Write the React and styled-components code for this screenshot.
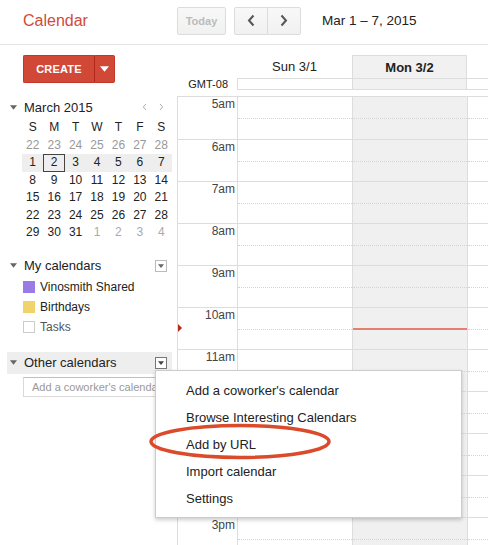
import React from "react";
import styled, { createGlobalStyle } from "styled-components";

const GlobalStyle = createGlobalStyle`
  html, body {
    margin: 0;
    padding: 0;
    background: #fff;
  }
  body {
    font-family: "Liberation Sans", Arial, sans-serif;
    color: #222;
  }
`;

const Page = styled.div`
  position: relative;
  width: 488px;
  height: 545px;
  overflow: hidden;
  background: #fff;
`;

const Header = styled.div`
  display: flex;
  align-items: center;
  height: 45px;
  box-sizing: border-box;
  padding: 7px 0 10px;
  border-bottom: 1px solid #e5e5e5;
`;

const Logo = styled.div`
  width: 177px;
  box-sizing: border-box;
  padding-left: 23px;
  font-size: 16px;
  color: #cf4a3b;
  line-height: 28px;
`;

const GreyButton = styled.button`
  height: 28px;
  width: ${(p) => p.$w || 34}px;
  box-sizing: border-box;
  border: 1px solid #dcdcdc;
  border-radius: ${(p) => p.$radius || "2px"};
  background: linear-gradient(#f8f8f8, #f1f1f1);
  font-family: inherit;
  font-size: 11px;
  font-weight: bold;
  color: #bbb;
  padding: 0;
  display: flex;
  align-items: center;
  justify-content: center;
  margin: 0;
`;

const NavGroup = styled.div`
  display: flex;
  margin-left: 8px;
  & > button + button {
    border-left: 1px solid #dcdcdc;
    margin-left: -1px;
  }
`;

const DateRange = styled.div`
  margin-left: 21px;
  font-size: 13.5px;
  color: #222;
`;

const Body = styled.div`
  display: flex;
`;

const Sidebar = styled.div`
  width: 177px;
  flex: none;
  padding-top: 10px;
`;

const CreateRow = styled.div`
  display: flex;
  margin-left: 23px;
  height: 28px;
`;

const CreateMain = styled.div`
  width: 71px;
  background: #d14836;
  border: 1px solid #c13828;
  border-right: none;
  border-radius: 2px 0 0 2px;
  box-sizing: border-box;
  color: #fff;
  font-size: 11px;
  font-weight: bold;
  display: flex;
  align-items: center;
  justify-content: center;
  letter-spacing: 0.2px;
`;

const CreateArrow = styled.div`
  width: 21px;
  background: #d14836;
  border: 1px solid #c13828;
  border-left: 1px solid #b0281a;
  border-radius: 0 2px 2px 0;
  box-sizing: border-box;
  display: flex;
  align-items: center;
  justify-content: center;
`;

const SectionHead = styled.div`
  display: flex;
  align-items: center;
  height: ${(p) => p.$h || 16}px;
  margin: ${(p) => p.$mt || 0}px 5px 0 7px;
  padding: 0 5px 0 3px;
  background: ${(p) => (p.$shaded ? "#eee" : "transparent")};
  font-size: 13px;
  color: #222;
`;

const HeadTitle = styled.div`
  flex: 1;
  margin-left: 7px;
  white-space: nowrap;
`;

const MiniNav = styled.div`
  display: flex;
  gap: 12px;
  margin-right: 3px;
`;

const MiniGrid = styled.div`
  display: grid;
  grid-template-columns: repeat(7, 1fr);
  width: 150px;
  margin: 4px 0 0 22px;
`;

const MiniCell = styled.div`
  height: 17.5px;
  line-height: 17.5px;
  text-align: center;
  font-size: 12px;
  color: ${(p) => p.$color || "#222"};
  background: ${(p) => (p.$week ? "#eee" : "transparent")};
  box-sizing: border-box;
  ${(p) => (p.$today ? "box-shadow: inset 0 0 0 1px #444;" : "")}
`;

const CalItem = styled.div`
  display: flex;
  align-items: center;
  height: 20px;
  padding-left: 23px;
  font-size: 12px;
  color: ${(p) => (p.$muted ? "#555" : "#222")};
  margin-top: ${(p) => p.$mt || 0}px;
`;

const Swatch = styled.span`
  width: 12px;
  height: 12px;
  box-sizing: border-box;
  background: ${(p) => p.$color || "#fff"};
  border: 1px solid ${(p) => p.$border || p.$color};
  margin-right: 5px;
  flex: none;
`;

const DropBox = styled.div`
  width: 12px;
  height: 12px;
  box-sizing: border-box;
  border: 1px solid ${(p) => (p.$dark ? "#777" : "#bbb")};
  background: #fff;
  display: flex;
  align-items: center;
  justify-content: center;
`;

const CoworkerInput = styled.div`
  margin: 3px 0 0 23px;
  width: 149px;
  height: 20px;
  box-sizing: border-box;
  border: 1px solid #d9d9d9;
  border-top-color: #c0c0c0;
  padding-left: 8px;
  font-size: 11px;
  line-height: 18px;
  color: #999;
  white-space: nowrap;
  overflow: hidden;
`;

const Main = styled.div`
  flex: 1;
  position: relative;
`;

const DayHeader = styled.div`
  display: grid;
  grid-template-columns: 60px 115px 115px 1fr;
  grid-template-rows: 23px 12px;
  margin: 10px 0 6px;
`;

const DayName = styled.div`
  font-size: 13px;
  line-height: 23px;
  text-align: center;
  font-weight: ${(p) => (p.$bold ? "bold" : "normal")};
  background: ${(p) => (p.$today ? "#f1f1f1" : "transparent")};
  ${(p) =>
    p.$today
      ? "border: 1px solid #ddd; border-bottom: none; box-sizing: border-box;"
      : ""}
`;

const Gmt = styled.div`
  font-size: 11px;
  text-align: right;
  padding-right: 9px;
  line-height: 12px;
  color: #222;
`;

const AllDay = styled.div`
  box-sizing: border-box;
  border-top: 1px solid #ddd;
  border-bottom: 1px solid #ddd;
  ${(p) => (p.$first ? "border-left: 1px solid #ddd;" : "")}
  ${(p) =>
    p.$today
      ? "background: #f1f1f1; border-left: 1px solid #ddd; border-right: 1px solid #ddd;"
      : ""}
`;

const TimeGrid = styled.div`
  display: flex;
  border-top: 1px solid #ddd;
`;

const Column = styled.div`
  position: relative;
  width: ${(p) => p.$w}px;
  flex: ${(p) => (p.$w ? "none" : 1)};
  box-sizing: border-box;
  border-left: 1px solid #ddd;
  background: ${(p) => (p.$today ? "#f0f0f0" : "transparent")};
`;

const Slot = styled.div`
  position: relative;
  height: 42px;
  box-sizing: border-box;
  border-top: ${(p) => (p.$first ? "none" : "1px solid #ddd")};
  ${(p) =>
    p.$half
      ? `&::after {
    content: "";
    position: absolute;
    left: 0;
    right: 0;
    top: 21px;
    border-top: 1px dotted #d4d4d4;
  }`
      : ""}
`;

const TimeLabel = styled(Slot)`
  font-size: 12px;
  color: #444;
  text-align: right;
  padding-right: 2px;
  line-height: 14px;
`;

const NowLine = styled.div`
  position: absolute;
  left: 0;
  right: 0;
  top: 231px;
  height: 2px;
  background: #e5806f;
`;

const NowMark = styled.div`
  position: absolute;
  left: 0;
  top: 227px;
  width: 0;
  height: 0;
  border-top: 4px solid transparent;
  border-bottom: 4px solid transparent;
  border-left: 4px solid #b5281c;
`;

const Menu = styled.div`
  position: absolute;
  left: 155px;
  top: 370px;
  width: 307px;
  height: 148px;
  box-sizing: border-box;
  padding: 6px 0;
  background: #fff;
  border: 1px solid rgba(0, 0, 0, 0.2);
  box-shadow: 0 2px 4px rgba(0, 0, 0, 0.2);
  z-index: 5;
`;

const MenuItem = styled.div`
  height: 27px;
  line-height: 27px;
  padding-left: 30px;
  font-size: 13px;
  color: #222;
  white-space: nowrap;
`;

const Highlight = styled.svg`
  position: absolute;
  left: 148px;
  top: 422px;
  z-index: 6;
  overflow: visible;
`;

const Tri = ({ size = 7, color = "#666" }) => (
  <svg width={size} height={Math.ceil(size / 2) + 1} viewBox="0 0 8 5">
    <path d="M0 0h8L4 5z" fill={color} />
  </svg>
);

const Chevron = ({ dir = "left", color = "#555", w = 8, h = 13, sw = 2 }) => (
  <svg width={w} height={h} viewBox="0 0 8 13" fill="none">
    <path
      d={dir === "left" ? "M6.5 1.5 2 6.5l4.5 5" : "M1.5 1.5 6 6.5l-4.5 5"}
      stroke={color}
      strokeWidth={sw}
    />
  </svg>
);

const weekdays = ["S", "M", "T", "W", "T", "F", "S"];
const weeks = [
  [22, 23, 24, 25, 26, 27, 28],
  [1, 2, 3, 4, 5, 6, 7],
  [8, 9, 10, 11, 12, 13, 14],
  [15, 16, 17, 18, 19, 20, 21],
  [22, 23, 24, 25, 26, 27, 28],
  [29, 30, 31, 1, 2, 3, 4],
];

const hours = ["5am", "6am", "7am", "8am", "9am", "10am", "11am", "12pm", "1pm", "2pm", "3pm"];

const menuItems = [
  "Add a coworker's calendar",
  "Browse Interesting Calendars",
  "Add by URL",
  "Import calendar",
  "Settings",
];

function MiniCalendar() {
  return (
    <MiniGrid>
      {weekdays.map((d, i) => (
        <MiniCell key={"w" + i}>{d}</MiniCell>
      ))}
      {weeks.map((week, wi) =>
        week.map((d, di) => {
          let color = "#222";
          if (wi === 0) color = "#999";
          if (wi === 5 && di > 2) color = "#aaa";
          return (
            <MiniCell
              key={wi + "-" + di}
              $color={color}
              $week={wi === 1}
              $today={wi === 1 && di === 1}
            >
              {d}
            </MiniCell>
          );
        })
      )}
    </MiniGrid>
  );
}

function DayColumn({ width, today, children }) {
  return (
    <Column $w={width} $today={today}>
      {hours.map((h, i) => (
        <Slot key={h} $first={i === 0} $half />
      ))}
      {children}
    </Column>
  );
}

export default function App() {
  return (
    <Page>
      <GlobalStyle />
      <Header>
        <Logo>Calendar</Logo>
        <GreyButton $w={49}>Today</GreyButton>
        <NavGroup>
          <GreyButton $radius="2px 0 0 2px">
            <Chevron dir="left" />
          </GreyButton>
          <GreyButton $radius="0 2px 2px 0">
            <Chevron dir="right" />
          </GreyButton>
        </NavGroup>
        <DateRange>Mar 1 – 7, 2015</DateRange>
      </Header>
      <Body>
        <Sidebar>
          <CreateRow>
            <CreateMain>CREATE</CreateMain>
            <CreateArrow>
              <Tri size={9} color="#fff" />
            </CreateArrow>
          </CreateRow>

          <SectionHead $mt={16}>
            <Tri size={7} />
            <HeadTitle>March 2015</HeadTitle>
            <MiniNav>
              <Chevron dir="left" color="#999" w={5} h={8} sw={1.3} />
              <Chevron dir="right" color="#999" w={5} h={8} sw={1.3} />
            </MiniNav>
          </SectionHead>
          <MiniCalendar />

          <SectionHead $mt={16}>
            <Tri size={7} />
            <HeadTitle>My calendars</HeadTitle>
            <DropBox>
              <Tri size={6} color="#666" />
            </DropBox>
          </SectionHead>
          <CalItem $mt={3}>
            <Swatch $color="#9a7be6" />
            Vinosmith Shared
          </CalItem>
          <CalItem>
            <Swatch $color="#f0d36a" />
            Birthdays
          </CalItem>
          <CalItem $muted>
            <Swatch $color="#fff" $border="#ccc" />
            Tasks
          </CalItem>

          <SectionHead $mt={15} $h={22} $shaded>
            <Tri size={7} />
            <HeadTitle>Other calendars</HeadTitle>
            <DropBox $dark>
              <Tri size={6} color="#444" />
            </DropBox>
          </SectionHead>
          <CoworkerInput>Add a coworker's calendar</CoworkerInput>
        </Sidebar>

        <Main>
          <DayHeader>
            <div />
            <DayName>Sun 3/1</DayName>
            <DayName $bold $today>
              Mon 3/2
            </DayName>
            <div />
            <Gmt>GMT-08</Gmt>
            <AllDay $first />
            <AllDay $today />
            <AllDay />
          </DayHeader>
          <TimeGrid>
            <Column $w={60}>
              {hours.map((h, i) => (
                <TimeLabel key={h} $first={i === 0}>
                  {h}
                </TimeLabel>
              ))}
              <NowMark />
            </Column>
            <DayColumn width={115} />
            <DayColumn width={115} today>
              <NowLine />
            </DayColumn>
            <DayColumn />
          </TimeGrid>
        </Main>
      </Body>

      <Menu>
        {menuItems.map((m) => (
          <MenuItem key={m}>{m}</MenuItem>
        ))}
      </Menu>
      <Highlight width="184" height="40" viewBox="0 0 184 40">
        <ellipse
          cx="92"
          cy="19.5"
          rx="89"
          ry="16"
          fill="none"
          stroke="#dc4a2c"
          strokeWidth="3.5"
        />
      </Highlight>
    </Page>
  );
}
